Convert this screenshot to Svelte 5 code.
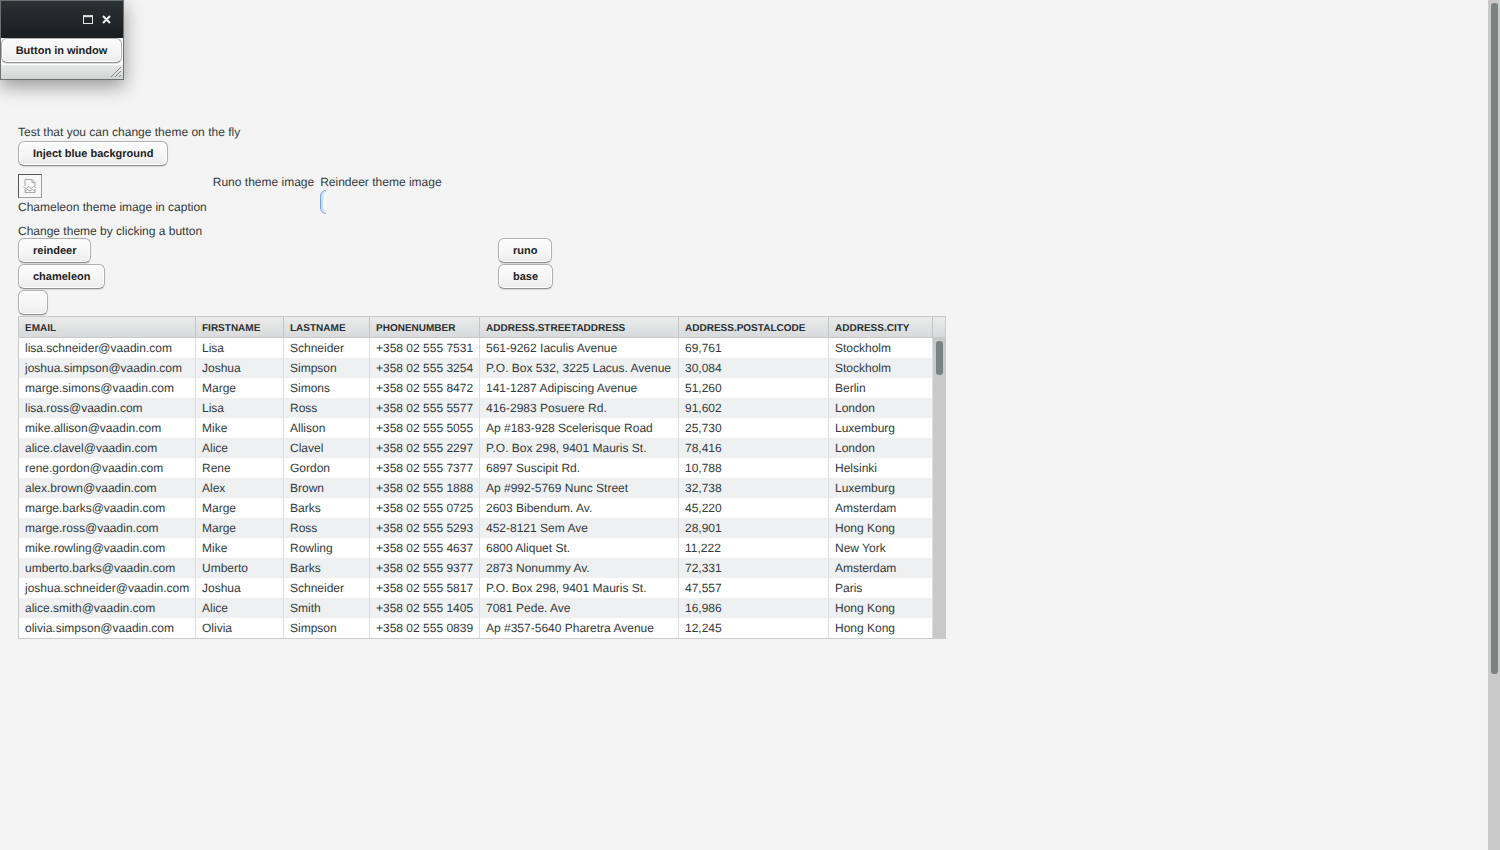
<script>
  const columns = [
    { key: "EMAIL", width: 177 },
    { key: "FIRSTNAME", width: 88 },
    { key: "LASTNAME", width: 86 },
    { key: "PHONENUMBER", width: 110 },
    { key: "ADDRESS.STREETADDRESS", width: 199 },
    { key: "ADDRESS.POSTALCODE", width: 150 },
    { key: "ADDRESS.CITY", width: 104 }
  ];

  const rows = [
    ["lisa.schneider@vaadin.com", "Lisa", "Schneider", "+358 02 555 7531", "561-9262 Iaculis Avenue", "69,761", "Stockholm"],
    ["joshua.simpson@vaadin.com", "Joshua", "Simpson", "+358 02 555 3254", "P.O. Box 532, 3225 Lacus. Avenue", "30,084", "Stockholm"],
    ["marge.simons@vaadin.com", "Marge", "Simons", "+358 02 555 8472", "141-1287 Adipiscing Avenue", "51,260", "Berlin"],
    ["lisa.ross@vaadin.com", "Lisa", "Ross", "+358 02 555 5577", "416-2983 Posuere Rd.", "91,602", "London"],
    ["mike.allison@vaadin.com", "Mike", "Allison", "+358 02 555 5055", "Ap #183-928 Scelerisque Road", "25,730", "Luxemburg"],
    ["alice.clavel@vaadin.com", "Alice", "Clavel", "+358 02 555 2297", "P.O. Box 298, 9401 Mauris St.", "78,416", "London"],
    ["rene.gordon@vaadin.com", "Rene", "Gordon", "+358 02 555 7377", "6897 Suscipit Rd.", "10,788", "Helsinki"],
    ["alex.brown@vaadin.com", "Alex", "Brown", "+358 02 555 1888", "Ap #992-5769 Nunc Street", "32,738", "Luxemburg"],
    ["marge.barks@vaadin.com", "Marge", "Barks", "+358 02 555 0725", "2603 Bibendum. Av.", "45,220", "Amsterdam"],
    ["marge.ross@vaadin.com", "Marge", "Ross", "+358 02 555 5293", "452-8121 Sem Ave", "28,901", "Hong Kong"],
    ["mike.rowling@vaadin.com", "Mike", "Rowling", "+358 02 555 4637", "6800 Aliquet St.", "11,222", "New York"],
    ["umberto.barks@vaadin.com", "Umberto", "Barks", "+358 02 555 9377", "2873 Nonummy Av.", "72,331", "Amsterdam"],
    ["joshua.schneider@vaadin.com", "Joshua", "Schneider", "+358 02 555 5817", "P.O. Box 298, 9401 Mauris St.", "47,557", "Paris"],
    ["alice.smith@vaadin.com", "Alice", "Smith", "+358 02 555 1405", "7081 Pede. Ave", "16,986", "Hong Kong"],
    ["olivia.simpson@vaadin.com", "Olivia", "Simpson", "+358 02 555 0839", "Ap #357-5640 Pharetra Avenue", "12,245", "Hong Kong"]
  ];
</script>

<div class="page">
  <main class="content">
    <div class="window">
      <div class="windowHeader">
        <svg width="10" height="9" viewBox="0 0 10 9" fill="none" stroke="#e4e4e4">
          <rect x="0.5" y="1" width="9" height="7.500" />
          <path d="M0 1.200h10" stroke-width="2" />
        </svg>
        <svg width="9" height="9" viewBox="0 0 9 9" fill="none" stroke="#f0f0f0" stroke-width="2">
          <path d="M1 1l7 7M8 1l-7 7" />
        </svg>
      </div>
      <div class="windowBody">
        <button class="btn windowBtn">Button in window</button>
      </div>
      <div class="windowFooter">
        <svg width="12" height="12" viewBox="0 0 12 12" fill="none" stroke="#8a8a8a">
          <path d="M1 11L11 1M5 11l6-6M9 11l2-2" />
        </svg>
      </div>
    </div>

    <div class="label">Test that you can change theme on the fly</div>
    <button class="btn">Inject blue background</button>

    <div class="themeRow">
      <div class="chameleon">
        <div class="brokenImage">
          <svg width="16" height="16" viewBox="0 0 16 16" fill="none" stroke="#a8a8a8">
            <path d="M3 8V1.500h7l3 3V8" />
            <path d="M10 1.500v3h3" />
            <path d="M1.500 9l2.500 1.500 2.500-2 2.500 2 2.500-2 2.500 1" />
            <path d="M3 11v3.500h10V11" />
            <path d="M3 13l2.500-1.500 2.500 1.500 2.500-1.500 2.500 1.500" />
          </svg>
        </div>
        <div class="label">Chameleon theme image in caption</div>
      </div>
      <div class="label runo">Runo theme image</div>
      <div class="reindeer">
        <div class="label">Reindeer theme image</div>
        <div class="clipped"><span></span></div>
      </div>
    </div>

    <div class="label changeLabel">Change theme by clicking a button</div>
    <div class="themeButtons">
      <button class="btn">reindeer</button>
      <button class="btn">runo</button>
      <button class="btn">chameleon</button>
      <button class="btn">base</button>
      <button class="btn empty" aria-label="Empty"></button>
    </div>

    <div class="table">
      <div class="tableHeader">
        {#each columns as col}
          <div class="headCell" style="width: {col.width}px">{col.key}</div>
        {/each}
        <div class="headCorner"></div>
      </div>
      <div class="tableBody">
        <div class="tableRows">
          {#each rows as row, i}
            <div class="row" class:odd={i % 2 === 1}>
              {#each row as cell, c}
                <div class="cell" style="width: {columns[c].width}px">{cell}</div>
              {/each}
            </div>
          {/each}
        </div>
        <div class="tableScroll"><div class="tableThumb"></div></div>
      </div>
    </div>
  </main>
  <div class="pageScroll"><div class="pageThumb"></div></div>
</div>

<style>
  :global(body) {
    margin: 0;
    background: #f4f4f4;
    overflow: hidden;
  }

  .page {
    display: flex;
    height: 850px;
    font-family: "Liberation Sans", Arial, sans-serif;
    font-size: 12px;
    color: #333a3d;
    text-rendering: geometricPrecision;
  }

  .content {
    flex: 1;
    padding: 125px 0 0 18px;
    display: flex;
    flex-direction: column;
    align-items: flex-start;
  }

  .pageScroll {
    width: 12px;
    background: #c9c9c9;
    padding-top: 3px;
    box-sizing: border-box;
  }

  .pageThumb {
    width: 7px;
    height: 671px;
    margin-left: 3px;
    border-radius: 3px;
    background: #7b8282;
  }

  .label {
    line-height: 15px;
    white-space: nowrap;
  }

  .btn {
    display: block;
    height: 25px;
    padding: 0 14px;
    box-sizing: border-box;
    font-family: inherit;
    font-size: 11px;
    font-weight: bold;
    color: #222;
    background: linear-gradient(#fbfbfb, #f5f5f5 60%, #ebebeb);
    border: 1px solid #b0b0b0;
    border-bottom-color: #8f8f8f;
    border-radius: 6px;
    box-shadow: inset 0 0 0 1px #fff, 0 1px 1px rgba(0, 0, 0, 0.12);
    white-space: nowrap;
    text-rendering: geometricPrecision;
  }

  .label + .btn {
    margin-top: 1px;
  }

  .themeRow {
    display: flex;
    align-items: flex-start;
    gap: 6px;
    margin-top: 8px;
  }

  .brokenImage {
    width: 24px;
    height: 24px;
    box-sizing: border-box;
    display: flex;
    align-items: center;
    justify-content: center;
    border: 1px solid #a0a0a0;
    border-top-color: #555;
    border-left-color: #555;
    background: #f8f8f8;
  }

  .chameleon .label {
    margin-top: 2px;
  }

  .runo {
    margin-top: 1px;
  }

  .reindeer {
    padding-top: 1px;
  }

  .clipped {
    width: 6px;
    height: 24px;
    overflow: hidden;
  }

  .clipped span {
    display: block;
    width: 30px;
    height: 24px;
    box-sizing: border-box;
    background: #f8fbfe;
    border: 1px solid #7aa7d3;
    border-radius: 6px;
    box-shadow: inset 2px 0 2px #bcd6ee;
  }

  .changeLabel {
    margin-top: 9px;
    line-height: 14px;
  }

  .themeButtons {
    display: grid;
    grid-template-columns: 480px 480px;
    justify-items: start;
    row-gap: 1px;
  }

  .empty {
    width: 30px;
  }

  .window {
    position: absolute;
    left: 0;
    top: 0;
    width: 124px;
    height: 80px;
    box-sizing: border-box;
    border: 1px solid #6e7171;
    background: #fafafa;
    box-shadow: 0 6px 18px rgba(0, 0, 0, 0.4);
    display: flex;
    flex-direction: column;
  }

  .windowHeader {
    height: 37px;
    flex-shrink: 0;
    display: flex;
    align-items: center;
    justify-content: flex-end;
    gap: 9px;
    padding: 0 12px 0 0;
    box-sizing: border-box;
    background: linear-gradient(#2c3134, #1a1d1f);
  }

  .windowBody {
    height: 26px;
    flex-shrink: 0;
  }

  .windowBtn {
    width: 121px;
    padding: 0;
  }

  .windowFooter {
    flex: 1;
    display: flex;
    justify-content: flex-end;
    align-items: flex-end;
    padding: 0 1px 1px 0;
    background: linear-gradient(#e8e8e8, #d2d4d4);
    border-top: 1px solid #fff;
  }

  .table {
    width: 928px;
    height: 323px;
    box-sizing: border-box;
    margin-top: 1px;
    border: 1px solid #c8cacb;
    background: #fff;
  }

  .tableHeader {
    display: flex;
    height: 21px;
    background: linear-gradient(#eaebeb, #d8dadb);
    border-bottom: 1px solid #c8cacb;
    box-sizing: border-box;
  }

  .headCell {
    box-sizing: border-box;
    padding: 0 6px;
    line-height: 23px;
    font-size: 10px;
    font-weight: bold;
    color: #2b2f31;
    border-right: 1px solid #c2c4c5;
    white-space: nowrap;
    overflow: hidden;
  }

  .headCorner {
    flex: 1;
  }

  .tableBody {
    display: flex;
    height: 300px;
    overflow: hidden;
  }

  .tableRows {
    width: 914px;
  }

  .row {
    display: flex;
    height: 20px;
    background: #fff;
  }

  .row.odd {
    background: #eff0f1;
  }

  .cell {
    box-sizing: border-box;
    padding: 0 6px;
    line-height: 20px;
    font-size: 12px;
    color: #333a3d;
    border-right: 1px solid #dcdedf;
    white-space: nowrap;
    overflow: hidden;
  }

  .tableScroll {
    flex: 1;
    background: #c9c9c9;
    padding: 3px 0 0 3px;
  }

  .tableThumb {
    width: 7px;
    height: 34px;
    border-radius: 3px;
    background: #7b8282;
  }
</style>
